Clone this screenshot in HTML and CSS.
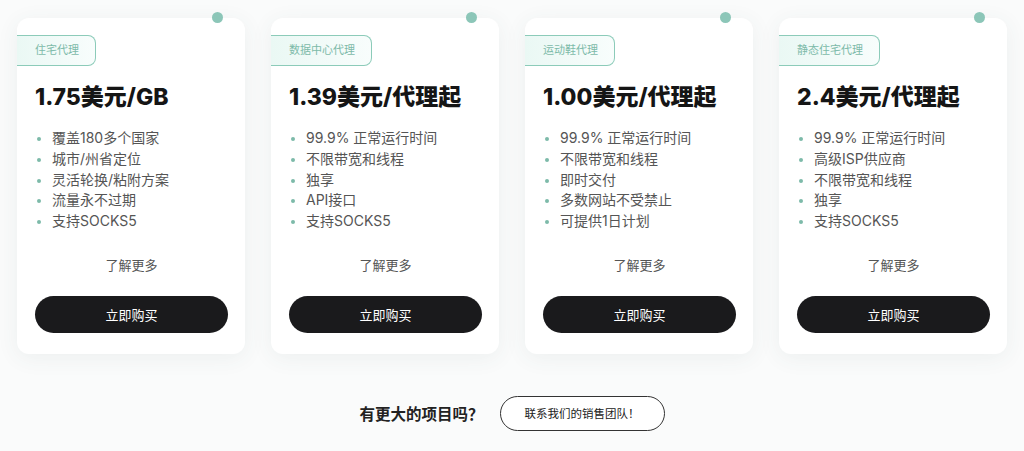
FILE: index.html
```html
<!DOCTYPE html>
<html>
<head>
    <title>代理套餐</title>
    <link rel="stylesheet" href="styles.css">
</head>
<body>
    <div class="plans">
        <div class="plan">
            <span class="dot"></span>
            <div class="tag">住宅代理</div>
            <h2 class="price">1.75美元/GB</h2>
            <ul class="features">
                <li>覆盖180多个国家</li>
                <li>城市/州省定位</li>
                <li>灵活轮换/粘附方案</li>
                <li>流量永不过期</li>
                <li>支持SOCKS5</li>
            </ul>
            <a class="more">了解更多</a>
            <button class="buy">立即购买</button>
        </div>
        <div class="plan">
            <span class="dot"></span>
            <div class="tag">数据中心代理</div>
            <h2 class="price">1.39美元/代理起</h2>
            <ul class="features">
                <li>99.9% 正常运行时间</li>
                <li>不限带宽和线程</li>
                <li>独享</li>
                <li>API接口</li>
                <li>支持SOCKS5</li>
            </ul>
            <a class="more">了解更多</a>
            <button class="buy">立即购买</button>
        </div>
        <div class="plan">
            <span class="dot"></span>
            <div class="tag">运动鞋代理</div>
            <h2 class="price">1.00美元/代理起</h2>
            <ul class="features">
                <li>99.9% 正常运行时间</li>
                <li>不限带宽和线程</li>
                <li>即时交付</li>
                <li>多数网站不受禁止</li>
                <li>可提供1日计划</li>
            </ul>
            <a class="more">了解更多</a>
            <button class="buy">立即购买</button>
        </div>
        <div class="plan">
            <span class="dot"></span>
            <div class="tag">静态住宅代理</div>
            <h2 class="price">2.4美元/代理起</h2>
            <ul class="features">
                <li>99.9% 正常运行时间</li>
                <li>高级ISP供应商</li>
                <li>不限带宽和线程</li>
                <li>独享</li>
                <li>支持SOCKS5</li>
            </ul>
            <a class="more">了解更多</a>
            <button class="buy">立即购买</button>
        </div>
    </div>

    <div class="contact">
        <span class="question">有更大的项目吗？</span>
        <button class="sales">联系我们的销售团队！</button>
    </div>
</body>
</html>
```

FILE: styles.css
```css
body {
    margin: 0;
    background-color: #fafbfb;
    font-family: Inter, "Noto Sans CJK SC", sans-serif;
    color: #555;
}
.plans {
    display: grid;
    grid-template-columns: repeat(4, 228px);
    column-gap: 26px;
    padding: 18px 0 0 17px;
}
.plan {
    position: relative;
    display: flex;
    flex-direction: column;
    background: white;
    border-radius: 12px;
    padding: 17px 17px 21px 18px;
    box-shadow: 0 4px 22px rgba(60, 80, 80, 0.07);
}
.dot {
    position: absolute;
    top: -6px;
    right: 22px;
    width: 11px;
    height: 11px;
    border-radius: 50%;
    background-color: #8cc6b8;
}
.tag {
    align-self: flex-start;
    margin-left: -18px;
    height: 29px;
    line-height: 29px;
    padding: 0 16px 0 18px;
    font-size: 11px;
    color: #7dbaa9;
    border: 1px solid #8ccbb9;
    border-left: none;
    border-radius: 0 8px 8px 0;
    background: linear-gradient(90deg, #eaf8f4, #f8fdfc);
}
.price {
    margin: 16px 0 0;
    font-size: 23px;
    line-height: 30px;
    font-weight: 800;
    color: #151515;
}
.features {
    list-style: none;
    margin: 16px 0 0;
    padding: 0;
}
.features li {
    position: relative;
    padding-left: 17px;
    font-size: 14px;
    line-height: 20.75px;
    color: #555;
}
.features li::before {
    content: "";
    position: absolute;
    left: 2px;
    top: 9px;
    width: 4px;
    height: 4px;
    border-radius: 50%;
    background-color: #7dbaa9;
}
.more {
    margin-top: 23px;
    text-align: center;
    font-size: 13px;
    line-height: 20px;
    color: #555;
    cursor: pointer;
}
.buy {
    margin-top: 21px;
    height: 37px;
    border: none;
    border-radius: 19px;
    background-color: #1a1a1c;
    color: white;
    font-family: inherit;
    font-size: 13px;
    cursor: pointer;
}
.contact {
    display: flex;
    justify-content: center;
    align-items: center;
    gap: 16px;
    margin-top: 42px;
}
.question {
    font-size: 15.5px;
    font-weight: 700;
    color: #222;
}
.sales {
    width: 165px;
    height: 35px;
    border: 1.5px solid #333;
    border-radius: 18px;
    background: white;
    font-family: inherit;
    font-size: 11.5px;
    color: #222;
    cursor: pointer;
}
```
